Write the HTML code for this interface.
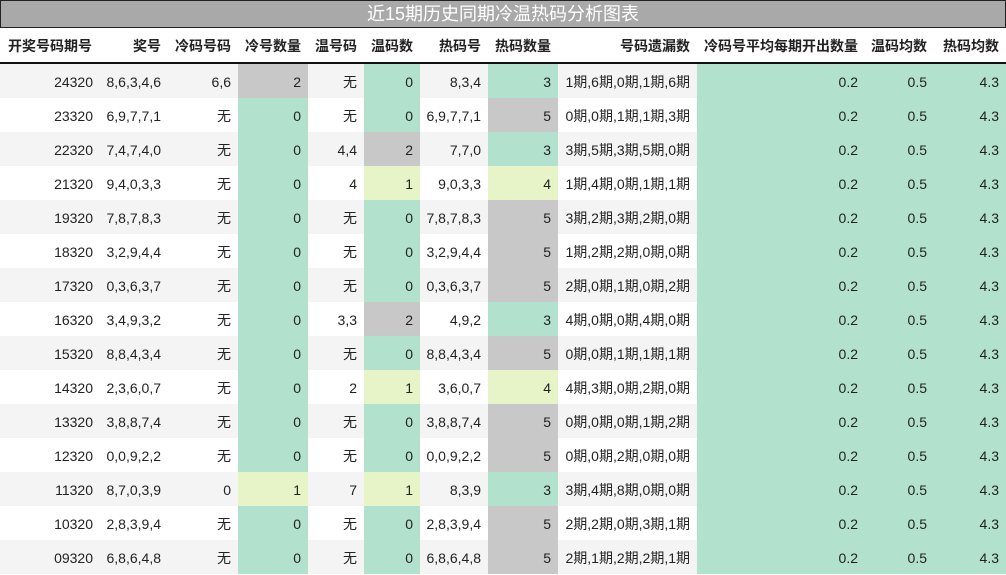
<!DOCTYPE html>
<html><head><meta charset="utf-8"><style>
body{margin:0;width:1006px;height:575px;overflow:hidden;background:#fff;font-family:"Liberation Sans","Noto Sans CJK SC",sans-serif;}
.title{position:absolute;left:0;top:0;width:1004px;height:26px;background:#a9a9a9;border:1px solid #222;color:#fff;font-size:18px;line-height:27px;text-align:center;}
.r{position:absolute;left:0;width:1006px;height:34px;display:flex;}
.r>div{height:34px;line-height:36px;padding-right:7px;box-sizing:border-box;text-align:right;font-size:14px;color:#222;white-space:nowrap;overflow:hidden;flex:none;}
.h{top:28px;height:34px;border-bottom:2px solid #111;}
.h>div{font-weight:bold;line-height:36px;}
.h>div:first-child{text-align:left;padding-left:8px;}
.o{background:#f4f4f4;}
.e{background:#fff;}
.r>.g{background:#b2e2cd;}
.r>.y{background:#e6f4c8;}
.r>.s{background:#c8c8c8;}
.r>div:nth-child(1){width:100px}.r>div:nth-child(2){width:68px}.r>div:nth-child(3){width:70px}.r>div:nth-child(4){width:70px}.r>div:nth-child(5){width:56px}.r>div:nth-child(6){width:56px}.r>div:nth-child(7){width:68px}.r>div:nth-child(8){width:70px}.r>div:nth-child(9){width:139px}.r>div:nth-child(10){width:168px}.r>div:nth-child(11){width:69px}.r>div:nth-child(12){width:72px}
</style></head><body>
<div class="title">近15期历史同期冷温热码分析图表</div>
<div class="r h"><div>开奖号码期号</div><div>奖号</div><div>冷码号码</div><div>冷号数量</div><div>温号码</div><div>温码数</div><div>热码号</div><div>热码数量</div><div>号码遗漏数</div><div>冷码号平均每期开出数量</div><div>温码均数</div><div>热码均数</div></div>
<div class="r o" style="top:64px"><div>24320</div><div>8,6,3,4,6</div><div>6,6</div><div class="s">2</div><div>无</div><div class="g">0</div><div>8,3,4</div><div class="g">3</div><div>1期,6期,0期,1期,6期</div><div class="g">0.2</div><div class="g">0.5</div><div class="g">4.3</div></div>
<div class="r e" style="top:98px"><div>23320</div><div>6,9,7,7,1</div><div>无</div><div class="g">0</div><div>无</div><div class="g">0</div><div>6,9,7,7,1</div><div class="s">5</div><div>0期,0期,1期,1期,3期</div><div class="g">0.2</div><div class="g">0.5</div><div class="g">4.3</div></div>
<div class="r o" style="top:132px"><div>22320</div><div>7,4,7,4,0</div><div>无</div><div class="g">0</div><div>4,4</div><div class="s">2</div><div>7,7,0</div><div class="g">3</div><div>3期,5期,3期,5期,0期</div><div class="g">0.2</div><div class="g">0.5</div><div class="g">4.3</div></div>
<div class="r e" style="top:166px"><div>21320</div><div>9,4,0,3,3</div><div>无</div><div class="g">0</div><div>4</div><div class="y">1</div><div>9,0,3,3</div><div class="y">4</div><div>1期,4期,0期,1期,1期</div><div class="g">0.2</div><div class="g">0.5</div><div class="g">4.3</div></div>
<div class="r o" style="top:200px"><div>19320</div><div>7,8,7,8,3</div><div>无</div><div class="g">0</div><div>无</div><div class="g">0</div><div>7,8,7,8,3</div><div class="s">5</div><div>3期,2期,3期,2期,0期</div><div class="g">0.2</div><div class="g">0.5</div><div class="g">4.3</div></div>
<div class="r e" style="top:234px"><div>18320</div><div>3,2,9,4,4</div><div>无</div><div class="g">0</div><div>无</div><div class="g">0</div><div>3,2,9,4,4</div><div class="s">5</div><div>1期,2期,2期,0期,0期</div><div class="g">0.2</div><div class="g">0.5</div><div class="g">4.3</div></div>
<div class="r o" style="top:268px"><div>17320</div><div>0,3,6,3,7</div><div>无</div><div class="g">0</div><div>无</div><div class="g">0</div><div>0,3,6,3,7</div><div class="s">5</div><div>2期,0期,1期,0期,2期</div><div class="g">0.2</div><div class="g">0.5</div><div class="g">4.3</div></div>
<div class="r e" style="top:302px"><div>16320</div><div>3,4,9,3,2</div><div>无</div><div class="g">0</div><div>3,3</div><div class="s">2</div><div>4,9,2</div><div class="g">3</div><div>4期,0期,0期,4期,0期</div><div class="g">0.2</div><div class="g">0.5</div><div class="g">4.3</div></div>
<div class="r o" style="top:336px"><div>15320</div><div>8,8,4,3,4</div><div>无</div><div class="g">0</div><div>无</div><div class="g">0</div><div>8,8,4,3,4</div><div class="s">5</div><div>0期,0期,1期,1期,1期</div><div class="g">0.2</div><div class="g">0.5</div><div class="g">4.3</div></div>
<div class="r e" style="top:370px"><div>14320</div><div>2,3,6,0,7</div><div>无</div><div class="g">0</div><div>2</div><div class="y">1</div><div>3,6,0,7</div><div class="y">4</div><div>4期,3期,0期,2期,0期</div><div class="g">0.2</div><div class="g">0.5</div><div class="g">4.3</div></div>
<div class="r o" style="top:404px"><div>13320</div><div>3,8,8,7,4</div><div>无</div><div class="g">0</div><div>无</div><div class="g">0</div><div>3,8,8,7,4</div><div class="s">5</div><div>0期,0期,0期,1期,2期</div><div class="g">0.2</div><div class="g">0.5</div><div class="g">4.3</div></div>
<div class="r e" style="top:438px"><div>12320</div><div>0,0,9,2,2</div><div>无</div><div class="g">0</div><div>无</div><div class="g">0</div><div>0,0,9,2,2</div><div class="s">5</div><div>0期,0期,2期,0期,0期</div><div class="g">0.2</div><div class="g">0.5</div><div class="g">4.3</div></div>
<div class="r o" style="top:472px"><div>11320</div><div>8,7,0,3,9</div><div>0</div><div class="y">1</div><div>7</div><div class="y">1</div><div>8,3,9</div><div class="g">3</div><div>3期,4期,8期,0期,0期</div><div class="g">0.2</div><div class="g">0.5</div><div class="g">4.3</div></div>
<div class="r e" style="top:506px"><div>10320</div><div>2,8,3,9,4</div><div>无</div><div class="g">0</div><div>无</div><div class="g">0</div><div>2,8,3,9,4</div><div class="s">5</div><div>2期,2期,0期,3期,1期</div><div class="g">0.2</div><div class="g">0.5</div><div class="g">4.3</div></div>
<div class="r o" style="top:540px"><div>09320</div><div>6,8,6,4,8</div><div>无</div><div class="g">0</div><div>无</div><div class="g">0</div><div>6,8,6,4,8</div><div class="s">5</div><div>2期,1期,2期,2期,1期</div><div class="g">0.2</div><div class="g">0.5</div><div class="g">4.3</div></div>
</body></html>
